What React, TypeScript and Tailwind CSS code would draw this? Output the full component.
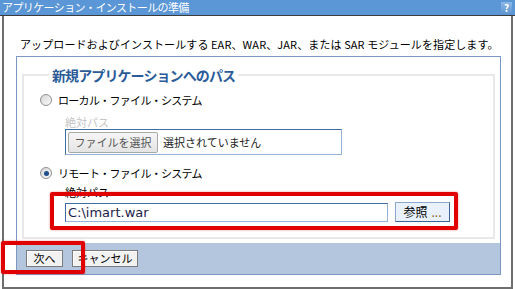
import React from 'react';

const jp = { fontFamily: '"Noto Sans CJK JP", "Noto Sans", sans-serif' };

function Radio({ checked }: { checked?: boolean }) {
  return (
    <span className="flex h-[12px] w-[12px] items-center justify-center rounded-full border border-[#8f9092] bg-gradient-to-br from-[#d6d6d6] to-[#fafafa]">
      {checked && <span className="h-[5px] w-[5px] rounded-full bg-[#1f4f8c]" />}
    </span>
  );
}

function WinButton({ label, width }: { label: string; width: string }) {
  return (
    <button
      className={`${width} h-[17px] border border-[#7b7b7b] bg-[#f2f2f2] text-[11px] leading-[15px] text-black shadow-[inset_1px_1px_0_#ffffff]`}
    >
      {label}
    </button>
  );
}

export default function App() {
  return (
    <div className="relative h-[289px] w-[515px] overflow-hidden bg-white text-black" style={jp}>
      {/* title bar */}
      <div className="flex h-[16px] items-center justify-between border-b border-[#3c3c3c] bg-[#5b96d6] pl-[2px] pr-[3px]">
        <span className="text-[11px] leading-[15px] tracking-[-0.6px] text-white">アプリケーション・インストールの準備</span>
        <span className="flex h-[12px] w-[11px] items-center justify-center bg-gradient-to-b from-[#8cb8e6] to-[#5f95cf] text-[10px] font-bold leading-none text-white">
          ?
        </span>
      </div>

      <div className="mx-[2px] h-[273px] border-x-2 border-b-2 border-[#6e6e6e]">
        <div className="flex h-[40px] items-end pb-[5px] pl-[16px] text-[11px] leading-[14px] tracking-[0.1px]">
          アップロードおよびインストールする EAR、WAR、JAR、または SAR モジュールを指定します。
        </div>

        <div className="ml-[12px] flex h-[219px] w-[485px] flex-col border border-[#7b98c3]">
          <fieldset className="mx-[5px] mt-[9px] h-[173px] border-2 border-[#e8e8e8] pl-[16px]">
            <legend className="ml-[9px] px-[3px] text-[14px] font-bold leading-[18px] tracking-[-0.9px] text-[#2b5c98]">
              新規アプリケーションへのパス
            </legend>

            <div className="mt-[8px] flex h-[16px] items-center gap-[6px]">
              <Radio />
              <span className="text-[11px] leading-[16px] tracking-[-0.7px]">ローカル・ファイル・システム</span>
            </div>
            <div className="ml-[25px] mt-[7px] text-[11px] leading-[14px] text-[#c4c4c4]">絶対パス</div>
            <div className="ml-[25px] flex h-[26px] w-[277px] items-center gap-[5px] border border-[#3f6ca2] border-b-[#93b2d6] border-r-[#93b2d6] pl-[2px]">
              <span className="flex h-[21px] w-[90px] items-center justify-center rounded-[2px] border border-[#a9a9a9] bg-gradient-to-b from-[#f6f6f6] to-[#e4e4e4] text-[11px] text-[#555555]">
                ファイルを選択
              </span>
              <span className="text-[11px] text-[#222222]">選択されていません</span>
            </div>

            <div className="mt-[10px] flex h-[16px] items-center gap-[6px]">
              <Radio checked />
              <span className="text-[11px] leading-[16px] tracking-[-0.7px]">リモート・ファイル・システム</span>
            </div>
            <div className="ml-[25px] mt-[4px] text-[11px] leading-[14px]">絶対パス</div>
            <div className="ml-[25px] mt-[3px] flex items-center gap-[7px]">
              <div
                className="flex h-[19px] w-[323px] items-center border border-[#3f6ca2] border-b-[#93b2d6] border-r-[#93b2d6] pl-[2px] text-[13px] text-[#1c1c48]"
                style={{ fontFamily: '"DejaVu Sans", sans-serif' }}
              >
                C:\imart.war
              </div>
              <span className="mb-[1px] flex h-[20px] w-[55px] items-center justify-center gap-[4px] border border-[#8ba8cf] border-b-[#3b6496] border-r-[#3b6496] bg-[#e9f1fc] text-[12px]">
                参照 <span className="text-[#8a6a1c]">...</span>
              </span>
            </div>
          </fieldset>

          <div className="mt-auto flex h-[31px] gap-[9px] bg-[#b4c6de] pl-[9px] pt-[7px]">
            <WinButton label="次へ" width="w-[37px]" />
            <WinButton label="キャンセル" width="w-[66px]" />
          </div>
        </div>
      </div>

      {/* highlight marks */}
      <div className="absolute left-[50px] top-[192px] h-[38px] w-[408px] rounded-[2px] border-4 border-[#e00000] shadow-[0_0_2px_rgba(230,0,0,0.5)]" />
      <div className="absolute left-[1px] top-[241px] h-[33px] w-[84px] rounded-[2px] border-4 border-[#e00000] shadow-[0_0_2px_rgba(230,0,0,0.5)]" />
    </div>
  );
}
